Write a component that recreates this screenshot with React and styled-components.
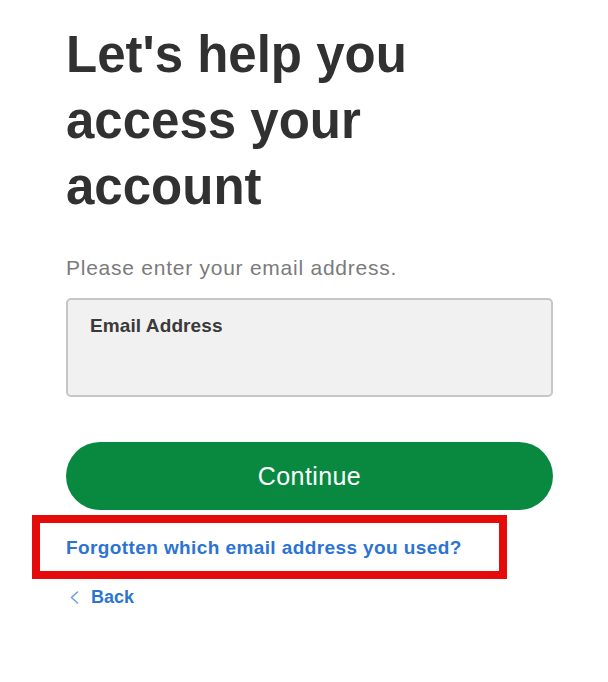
import React from "react";
import styled, { createGlobalStyle } from "styled-components";

const Global = createGlobalStyle`
  html, body { margin: 0; padding: 0; background: #ffffff; }
  body { font-family: "Liberation Sans", Arial, sans-serif; }
  * { box-sizing: border-box; }
`;

const Page = styled.main`
  width: 608px;
  min-height: 682px;
  padding: 22px 0 0 66px;
  display: flex;
  flex-direction: column;
`;

const Heading = styled.h1`
  margin: 0;
  font-family: "Liberation Sans", Arial, sans-serif;
  font-weight: 700;
  font-size: 51px;
  line-height: 66px;
  color: #313131;
  width: 420px;
`;

const Intro = styled.p`
  margin: 36px 0 0;
  font-size: 21px;
  line-height: 24px;
  letter-spacing: 0.75px;
  color: #7b7b7b;
`;

const Field = styled.label`
  margin-top: 18px;
  width: 487px;
  height: 99px;
  border: 2px solid #c6c6c6;
  border-radius: 5px;
  background: #f1f1f1;
  padding: 15px 22px;
  display: flex;
  flex-direction: column;
`;

const FieldLabel = styled.span`
  font-size: 19px;
  line-height: 22px;
  font-weight: 700;
  letter-spacing: 0.1px;
  color: #3a3a3a;
`;

const PrimaryButton = styled.button`
  margin-top: 45px;
  width: 487px;
  height: 68px;
  border: none;
  border-radius: 34px;
  background: #08893f;
  color: #ffffff;
  font-family: "Liberation Sans", Arial, sans-serif;
  font-size: 25px;
  letter-spacing: 0.4px;
  display: flex;
  align-items: center;
  justify-content: center;
  padding: 0;
`;

const Highlight = styled.div`
  margin: 5px 0 0 -34px;
  width: 475px;
  height: 64px;
  border: 8px solid #e60b0b;
  padding: 14px 0 0 26px;
`;

const Link = styled.a`
  display: block;
  font-size: 19px;
  line-height: 22px;
  font-weight: 700;
  letter-spacing: 0.4px;
  color: #2c74d2;
  text-decoration: none;
`;

const BackLink = styled.a`
  margin-top: 7px;
  display: flex;
  align-items: center;
  gap: 12px;
  padding-left: 4px;
  font-size: 18px;
  line-height: 22px;
  font-weight: 700;
  color: #2c74d2;
  text-decoration: none;
`;

const Chevron = () => (
  <svg width="9" height="13" viewBox="0 0 9 13" fill="none">
    <polyline points="7.5,1 1.5,6.5 7.5,12" stroke="#6d9fe0" strokeWidth="1.6" strokeLinecap="round" strokeLinejoin="round" />
  </svg>
);

export default function App() {
  return (
    <>
      <Global />
      <Page>
        <Heading>Let's help you access your account</Heading>
        <Intro>Please enter your email address.</Intro>
        <Field>
          <FieldLabel>Email Address</FieldLabel>
        </Field>
        <PrimaryButton>Continue</PrimaryButton>
        <Highlight>
          <Link href="#">Forgotten which email address you used?</Link>
        </Highlight>
        <BackLink href="#">
          <Chevron />
          Back
        </BackLink>
      </Page>
    </>
  );
}
